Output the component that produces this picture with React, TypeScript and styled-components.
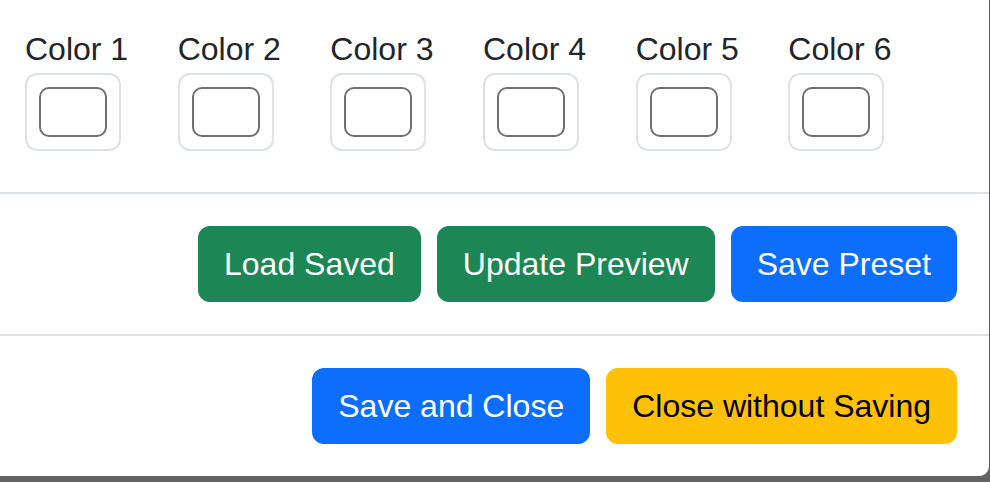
import React from "react";
import styled, { createGlobalStyle, css } from "styled-components";

const GlobalStyle = createGlobalStyle`
  html, body {
    margin: 0;
    padding: 0;
    background: #646464;
  }
  body {
    font-family: "Liberation Sans", Arial, Helvetica, sans-serif;
    -webkit-font-smoothing: antialiased;
  }
`;

const Screen = styled.div`
  width: 990px;
  height: 482px;
  overflow: hidden;
  background: #646464;
`;

const Window = styled.div`
  width: 989px;
  height: 476px;
  background: #ffffff;
  border-right: 1px solid #5a5a5a;
  border-bottom-right-radius: 10px;
  overflow: hidden;
`;

const ModalContent = styled.div`
  margin: -7px 0 0 -7px;
  width: calc(100% + 7px);
  display: flex;
  flex-direction: column;
  background: #ffffff;
  color: #212529;
`;

const ModalBody = styled.div`
  display: flex;
  gap: 49.5px;
  padding: 32px 32px 41px;
`;

const ColorField = styled.div`
  display: flex;
  flex-direction: column;
  align-items: flex-start;
`;

const FieldLabel = styled.label`
  display: block;
  font-size: 32px;
  line-height: 48px;
  color: #212529;
  white-space: nowrap;
`;

const ColorInput = styled.input`
  -webkit-appearance: none;
  appearance: none;
  box-sizing: border-box;
  width: 96px;
  height: 78px;
  margin: 0;
  padding: 12px;
  border: 2px solid #dee2e6;
  border-radius: 12px;
  background: #ffffff;
  cursor: pointer;

  &::-webkit-color-swatch-wrapper {
    padding: 0;
  }
  &::-webkit-color-swatch {
    border: 2px solid #707070;
    border-radius: 10px;
  }
`;

const Footer = styled.div`
  display: flex;
  justify-content: flex-end;
  align-items: center;
  gap: 16px;
  padding: 32px;
  border-top: 2px solid #dee2e6;
`;

type Variant = "success" | "primary" | "warning";

const variants: Record<Variant, ReturnType<typeof css>> = {
  success: css`
    background: #1c8754;
    border-color: #1c8754;
    color: #ffffff;
  `,
  primary: css`
    background: #0d6efd;
    border-color: #0d6efd;
    color: #ffffff;
  `,
  warning: css`
    background: #ffc107;
    border-color: #ffc107;
    color: #000000;
  `,
};

const Button = styled.button<{ $variant: Variant }>`
  box-sizing: border-box;
  margin: 0;
  padding: 12px 24px;
  border: 2px solid transparent;
  border-radius: 12px;
  font-family: inherit;
  font-size: 32px;
  line-height: 48px;
  font-weight: 400;
  white-space: nowrap;
  cursor: pointer;
  ${(p) => variants[p.$variant]}
`;

const colors = [1, 2, 3, 4, 5, 6];

export default function App() {
  return (
    <>
      <GlobalStyle />
      <Screen>
        <Window>
          <ModalContent>
            <ModalBody>
              {colors.map((n) => (
                <ColorField key={n}>
                  <FieldLabel htmlFor={`color-${n}`}>Color {n}</FieldLabel>
                  <ColorInput id={`color-${n}`} type="color" defaultValue="#ffffff" />
                </ColorField>
              ))}
            </ModalBody>
            <Footer>
              <Button $variant="success">Load Saved</Button>
              <Button $variant="success">Update Preview</Button>
              <Button $variant="primary">Save Preset</Button>
            </Footer>
            <Footer>
              <Button $variant="primary">Save and Close</Button>
              <Button $variant="warning">Close without Saving</Button>
            </Footer>
          </ModalContent>
        </Window>
      </Screen>
    </>
  );
}
